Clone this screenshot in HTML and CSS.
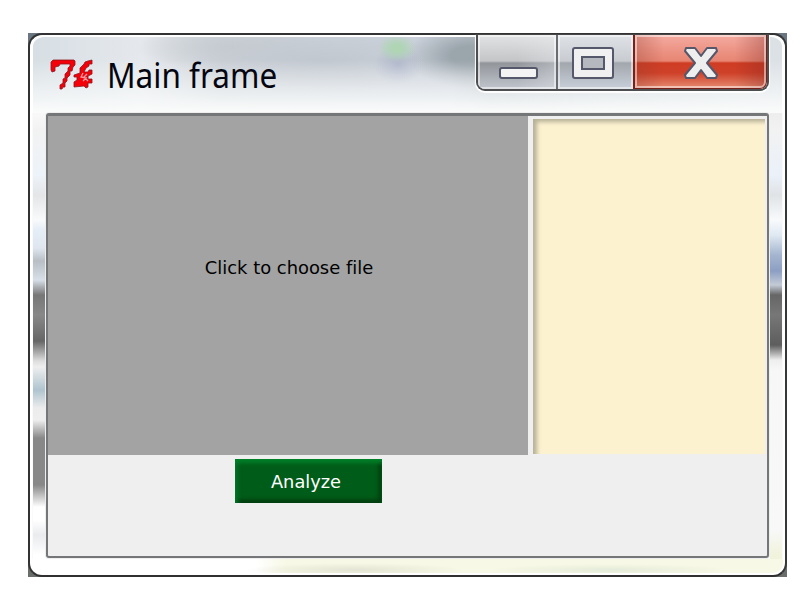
FILE: index.html
```html
<!DOCTYPE html>
<html lang="en">
<head>
<meta charset="utf-8">
<title>Main frame</title>
<link rel="stylesheet" href="styles.css">
</head>
<body>
<div class="backing">
<main class="window">
  <header class="titlebar">
    <svg class="logo" viewBox="0 0 44 32" width="44" height="32">
      <path fill="#f40008" stroke="#8c1820" stroke-width=".8" d="M1 3L3 1H24L25 2V6L23 8L22 12H20V16L17 19V22L15 24V28L13 28L12 30H10V26L13 24V20L15 19V15L18 12V9L20 7V5H10L9 7L5 8V12L2 13L1 11ZM38 2L42 1V5H39V7L36 9L34 13H38L39 11H42V15L38 17V20H42V24H38V28L36 29L34 27L24 28V23L27 21V18H24V16L30 14V9L34 5L35 3Z"/>
      <path fill="none" stroke="#ef9ca4" stroke-width="1.3" d="M33 14L31 18L36 19L33 22M37 15L34 18L38 22"/>
    </svg>
    <h1>Main frame</h1>
    <div class="controls">
      <button class="minimize" aria-label="Minimize"><svg width="39" height="12"><rect x="1" y="1" width="37" height="10" rx="2" fill="#f3f3f3" stroke="#55576b" stroke-width="2"/></svg></button>
      <button class="maximize" aria-label="Maximize"><svg width="42" height="32"><rect x="1" y="1" width="40" height="30" rx="2" fill="#f0f0f0" stroke="#55576b" stroke-width="2"/><rect x="10" y="10" width="22" height="12" fill="#b5b8bf" stroke="#55576b" stroke-width="2"/></svg></button>
      <button class="close" aria-label="Close"><svg width="36" height="32"><path d="M3 1H12L18 9L24 1H33L34 4L24 16L34 28L33 31H24L18 23L12 31H3L2 28L12 16L2 4Z" fill="#eee" stroke="#55576b" stroke-width="2" stroke-linejoin="round"/></svg></button>
    </div>
  </header>
  <section class="client">
    <div class="panes">
      <div class="picker"><span>Click to choose file</span></div>
      <div class="output"></div>
    </div>
    <button class="analyze"><span>Analyze</span></button>
  </section>
</main>
</div>
</body>
</html>
```

FILE: styles.css
```css
* { box-sizing: border-box; }
body { margin: 0; background: #fff; overflow: hidden; }
button { border: 0; padding: 0; margin: 0; }
svg { display: block; }
.backing {
  width: 759px;
  height: 544px;
  margin: 33px 0 0 28px;
  background: linear-gradient(#6a7682, #6a6e6a);
}
.window {
  position: relative;
  width: 759px;
  height: 544px;
  padding: 0 16px;
  border: 2px solid #2c2d2e;
  border-color: #333 #343838 #303030 #333;
  border-radius: 14px;
  box-shadow: inset 0 0 0 2px #fff;
  background:
    radial-gradient(ellipse 110px 7px at 325px 535px, rgba(215,215,200,.6), transparent),
    radial-gradient(ellipse 120px 6px at 580px 535px, rgba(220,230,212,.7), transparent),
    linear-gradient(90deg, #fff 0 30%, #f7f8e5 34% 100%) 0 524px / 100% 18px no-repeat,
    linear-gradient(#f8f8f8 80px, #f2f2f2 95px, #edf3fa 140px, #e3e5e7 160px, #f8fafc 185px, #e5edf7 195px, #dfe6ef 213px, #b8bec4 226px, #d8dfe8 245px, #777 260px, #888 280px, #666 306px, #ddd 326px, #eee 332px, #afc4cf 355px, #ececec 373px, #eee 385px, #888 403px, #888 450px, #fff 472px, #fff 485px, #e9ebee 500px, #fff 520px) 3px 0 / 13px 100% no-repeat,
    linear-gradient(#eee 80px, #f2f2f2 95px, #eaf1f9 140px, #e0e3e6 160px, #f8fafc 185px, #dfe9f2 200px, #a5b5d0 220px, #8c9fc3 236px, #c4cbd6 250px, #666 260px, #777 280px, #5d5d5d 310px, #eee 325px, #f7f7f8 335px, #f8f8f8 495px, #f1f3dc 520px) right 3px top 0 / 12px 100% no-repeat,
    #fafafa;
}
.titlebar {
  height: 78px;
  margin: 0 -14px;
  padding-left: 18px;
  display: flex;
  align-items: flex-start;
  border-radius: 12px 12px 0 0;
  box-shadow: inset 0 2px #fff, inset 1px 0 #fff, inset -1px 0 #fff;
  background:
    linear-gradient(transparent 25px, rgba(248,250,250,.85) 67px, #fbfbfb 78px),
    radial-gradient(ellipse 20px 14px at 365px 13px, #afd5b5 0 25%, transparent),
    radial-gradient(ellipse 24px 20px at 366px 30px, #aeb5c9 0, transparent),
    radial-gradient(ellipse 64px 32px at 438px 21px, #9ba5ac 0 30%, transparent),
    radial-gradient(ellipse 130px 32px at 290px 27px, #c1c7cf 0, transparent),
    radial-gradient(ellipse 95px 24px at 200px 12px, #c5cbd0, transparent),
    linear-gradient(90deg, #d7dfe4, #e5e8ec 110px, #ccd2d8 190px, #cbd1db 420px, #b9c1c7 460px, #dce1e6 730px);
}
.logo { margin-top: 24px; }
h1 {
  width: 369px;
  margin: 16px 0 0 13px;
  font: 400 34px/48px "Noto Sans", sans-serif;
  color: #050510;
  transform-origin: left;
  transform: scaleX(.927);
  white-space: nowrap;
}
.controls {
  display: flex;
  width: 293px;
  height: 56px;
  overflow: hidden;
  border: 2px solid #4c4e50;
  border-top: 0;
  border-radius: 0 0 9px 9px;
  box-shadow: 0 1px 1px 1px #fff;
  flex: none;
}
.controls button { position: relative; height: 54px; display: flex; justify-content: center; box-shadow: inset 0 0 0 2px rgba(255,255,255,.5); }
.minimize { width: 80px; padding-top: 32px !important; border-right: 2px solid #696c71; background: linear-gradient(90deg, transparent 50%, rgba(235,235,240,.35)), linear-gradient(#e2e3e4, #c3c5c7 26px, #92969b 28px, #bfc3cb 53px); }
.minimize svg { margin-left: 2px; }
.maximize { width: 75px; padding-top: 12px !important; background: linear-gradient(#dfe2e7, #c8ccd1 26px, #a2a7ad 28px, #c8ced8 53px); }
.maximize svg { margin-right: 6px; }
.close { flex: 1; padding-top: 12px !important; border-left: 2px solid #792119; border-right: 1px solid #792119; border-bottom: 1px solid #792119; border-radius: 0 0 7px 0; background: linear-gradient(90deg, rgba(145,60,45,.32), transparent 22% 76%, rgba(120,35,30,.32)), linear-gradient(#f4aaa0, #e78573 26px, #cf3c23 28px, #cf4129 38px, #e88f76 54px); }
.close svg { margin-left: 1px; }
.client {
  width: 723px;
  height: 445px;
  border: 2px solid #747678;
  border-top-width: 3px;
  border-radius: 3px;
  box-shadow: 0 0 0 1px #eee;
  background: #efefef;
}
.panes { display: flex; gap: 5px; height: 339px; }
.picker {
  width: 480px;
  background: #a3a3a3;
  display: flex;
  justify-content: center;
  padding: 140px 0 0 2px;
  font: 17.9px/24px "DejaVu Sans", sans-serif;
  font-variant-ligatures: none;
  color: #000;
}
.output { flex: 1; margin: 3px 2px 1px 0; background: #fdf2d0; box-shadow: inset 6px 5px 4px -2px #b7b198; }
.analyze {
  display: flex;
  justify-content: center;
  align-items: center;
  width: 147px;
  height: 44px;
  margin: 4px 0 0 187px;
  padding: 2px 5px 0 0;
  color: #fff;
  font: 17.8px/24px "DejaVu Sans", sans-serif;
  background: #005c19;
  box-shadow: inset 0 5px 4px -1px #00812a, inset 5px 0 4px -2px #00712a, inset -5px 0 4px -2px #00370c, inset 0 -5px 4px -2px #00370c;
}
```
